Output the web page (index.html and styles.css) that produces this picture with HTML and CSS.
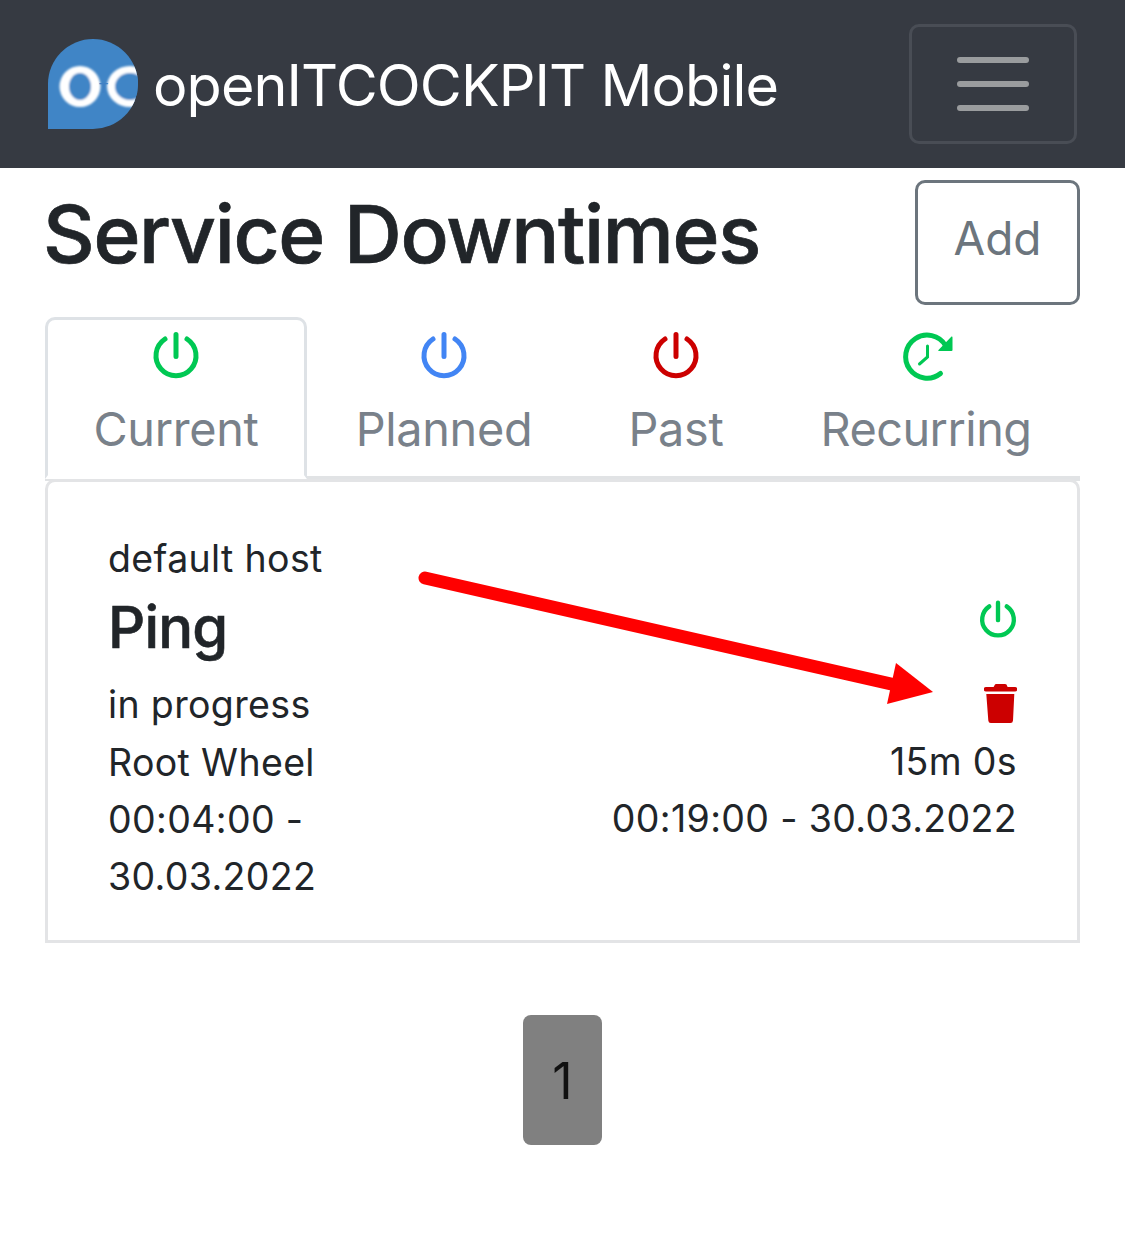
FILE: index.html
```html
<!DOCTYPE html>
<html lang="en">
<head>
<meta charset="utf-8">
<title>Service Downtimes</title>
<link rel="stylesheet" href="styles.css">
</head>
<body>
<header class="navbar">
  <a class="brand">
    <svg class="logo" viewBox="0 0 90 90" aria-hidden="true">
      <defs><clipPath id="logoClip"><path d="M0 90V45A45 45 0 1 1 45 90Z"/></clipPath><filter id="soft"><feGaussianBlur stdDeviation="1"/></filter></defs>
      <path d="M0 90V45A45 45 0 1 1 45 90Z" fill="#4085c6"/>
      <g clip-path="url(#logoClip)">
        <g filter="url(#soft)">
          <ellipse cx="32" cy="47.500" rx="20.500" ry="20.500" fill="#fff"/>
          <ellipse cx="32" cy="47.500" rx="11" ry="13.500" fill="#4085c6"/>
          <ellipse cx="82" cy="47.500" rx="23" ry="20.500" fill="#fff"/>
          <ellipse cx="82" cy="47.500" rx="15" ry="13.500" fill="#4085c6"/>
        </g>
        <text class="logo-t" x="51" y="54">T</text>
      </g>
    </svg>
    <span class="brand-text">openITCOCKPIT Mobile</span>
  </a>
  <button class="toggler" aria-label="Menu"><span></span><span></span><span></span></button>
</header>
<main class="content">
  <div class="title-row">
    <h1>Service Downtimes</h1>
    <button class="add">Add</button>
  </div>
  <nav class="tabs">
    <a class="tab active">
      <svg class="tab-icon green" viewBox="0 0 48 48"><path d="M13 8A20 20 0 1 0 35 8M24 3.500v22"/></svg>
      <span>Current</span>
    </a>
    <a class="tab planned">
      <svg class="tab-icon blue" viewBox="0 0 48 48"><path d="M13 8A20 20 0 1 0 35 8M24 3.500v22"/></svg>
      <span>Planned</span>
    </a>
    <a class="tab past">
      <svg class="tab-icon red" viewBox="0 0 48 48"><path d="M13 8A20 20 0 1 0 35 8M24 3.500v22"/></svg>
      <span>Past</span>
    </a>
    <a class="tab recurring">
      <svg class="tab-icon green recur-icon" viewBox="-2.500 -1 50 50"><path d="M42 13.500A21.500 21.500 0 1 0 37 41.500"/><path class="hand" d="M24 14v11l-8 7"/><path class="fill" d="M48 4.500Q49 4 49 5.500V18Q49 19 48 19H35.500Q34 19 35 18Z"/></svg>
      <span>Recurring</span>
    </a>
  </nav>
  <section class="card">
    <div class="col-left">
      <div class="line">default host</div>
      <div class="service">Ping</div>
      <div class="line">in progress</div>
      <div class="line">Root Wheel</div>
      <div class="line">00:04:00 - 30.03.2022</div>
    </div>
    <div class="col-right">
      <svg class="act-power" viewBox="0 0 48 48"><path d="M13 8A20 20 0 1 0 35 8M24 3.500v22"/></svg>
      <svg class="act-trash" viewBox="0 0 33 39"><path d="M2 3H9.600L11 .5Q11.300 0 12 0H21Q22 0 22.500 .5L23.600 3H31A2.200 2.200 0 0 1 31 7.500H2A2.200 2.200 0 0 1 2 3ZM2.300 10H30.300L29 36.500Q28.800 39 26.500 39H6.800Q4.500 39 4.300 36.500Z"/></svg>
      <div class="line">15m 0s</div>
      <div class="line">00:19:00 - 30.03.2022</div>
    </div>
  </section>
  <div class="pager"><span class="page">1</span></div>
</main>
<svg class="arrow" viewBox="0 0 1125 1247" aria-hidden="true">
  <path d="M425 578L900 686" stroke="#ff0000" stroke-width="13" stroke-linecap="round" fill="none"/>
  <path d="M896 663L933 692L887 704Z" fill="#ff0000"/>
</svg>
</body>
</html>
```
FILE: styles.css
```css
* { box-sizing: border-box; }
html, body { margin: 0; padding: 0; }
body {
  position: relative;
  width: 1125px;
  min-height: 1247px;
  background: #fff;
  color: #212529;
  font-family: Inter, "Noto Sans", "Liberation Sans", sans-serif;
  overflow: hidden;
}
.navbar {
  height: 168px;
  background: #363a42;
  display: flex;
  align-items: center;
  justify-content: space-between;
  padding: 0 48px;
}
.brand { display: flex; align-items: center; gap: 16px; color: #fff; }
.logo { width: 90px; height: 90px; display: block; }
.logo-t { font-size: 15px; fill: #3f80c4; font-family: "Liberation Sans", sans-serif; }
.brand-text { font-size: 57.500px; letter-spacing: -0.900px; line-height: 1; padding-top: 4px; margin-left: -1px; }
.toggler {
  width: 168px;
  height: 120px;
  background: none;
  border: 3px solid #494d55;
  border-radius: 10px;
  display: flex;
  flex-direction: column;
  align-items: center;
  justify-content: center;
  gap: 18px;
  padding: 0;
}
.toggler span { width: 72px; height: 6px; border-radius: 3px; background: #9a9c9e; }
.content { padding: 12px 45px 0; }
.title-row { display: flex; justify-content: space-between; align-items: flex-start; }
h1 {
  margin: 0 0 0 -2px;
  font-size: 80px;
  font-weight: 500;
  line-height: 108px;
  letter-spacing: -1.300px;
  -webkit-text-stroke: .7px #212529;
}
.add {
  width: 165px;
  height: 125px;
  background: #fff;
  border: 3px solid #6c757d;
  border-radius: 10px;
  color: #6c757d;
  font: inherit;
  font-size: 46px;
  padding: 0 0 10px;
}
.tabs {
  display: flex;
  margin-top: 12px;
  height: 164px;
  border-bottom: 5px solid #e1e3e5;
}
.tab {
  display: flex;
  flex: none;
  flex-direction: column;
  align-items: center;
  height: 162px;
  color: #79818a;
  font-size: 46.800px;
  letter-spacing: -0.300px;
  line-height: 60px;
  padding: 14px 0 0;
}
.tab span { margin-top: 20px; }
.tab.active {
  width: 262px;
  background: #fff;
  border: 3px solid #dee2e6;
  border-bottom: 4px solid #fff;
  border-radius: 10px 10px 0 0;
  padding-top: 11px;
  position: relative;
}
.planned { width: 274px; }
.past { width: 190px; }
.recurring { width: 309px; }
.recurring span { letter-spacing: -0.500px; padding-left: 1px; }
.tab-icon {
  width: 48px;
  height: 48px;
  fill: none;
  stroke-width: 5px;
  stroke-linecap: round;
  overflow: visible;
}
.recur-icon { width: 50px; height: 50px; margin-bottom: -2px; }
.tab-icon .fill { stroke: none; }
.tab-icon .hand { stroke-width: 3px; }
.green { stroke: #00c853; }
.green .fill { fill: #00c853; }
.blue { stroke: #4285f4; }
.red { stroke: #cc0000; }
.card {
  position: relative;
  display: flex;
  justify-content: space-between;
  height: 464px;
  margin-top: -2px;
  padding: 48px 60px 0;
  border: 3px solid #e3e4e6;
  border-radius: 10px 10px 0 0;
  background: #fff;
}
.line { font-size: 37.500px; line-height: 57.300px; letter-spacing: .35px; }
.col-left { width: 300px; }
.service { font-size: 58px; font-weight: 500; line-height: 78px; letter-spacing: -0.800px; margin: 1px 0 10px; -webkit-text-stroke: .6px #212529; }
.col-right { display: flex; flex-direction: column; align-items: flex-end; text-align: right; padding-top: 70px; }
.act-power { width: 38px; height: 38px; fill: none; stroke: #00c853; stroke-width: 5.500px; stroke-linecap: round; }
.act-trash { width: 33px; height: 39px; fill: #cc0000; margin: 46px 0 10px; }
.pager { display: flex; justify-content: center; margin-top: 72px; }
.page {
  width: 79px;
  height: 130px;
  padding-top: 2px;
  background: #808080;
  border-radius: 8px;
  display: flex;
  align-items: center;
  justify-content: center;
  font-size: 50px;
  color: #111;
}
.arrow { position: absolute; left: 0; top: 0; width: 1125px; height: 1247px; pointer-events: none; }
```
